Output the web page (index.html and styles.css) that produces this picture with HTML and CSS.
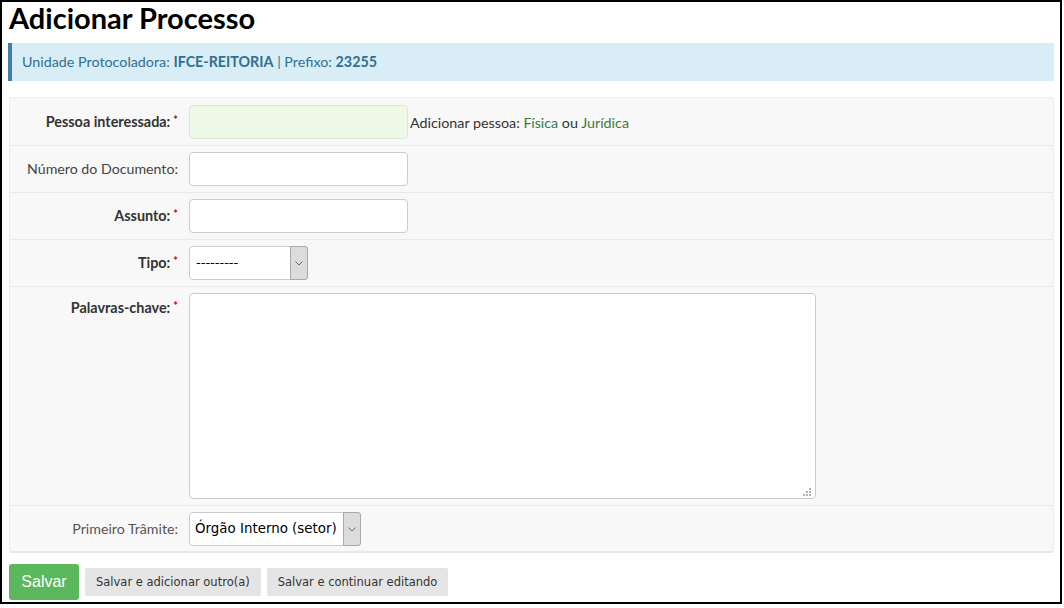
FILE: index.html
```html
<!DOCTYPE html>
<html lang="pt-BR">
<head>
<meta charset="utf-8">
<title>Adicionar Processo</title>
<link rel="stylesheet" href="styles.css">
</head>
<body>
<div class="page">
  <h1 class="title">Adicionar Processo</h1>
  <div class="info">Unidade Protocoladora: <b>IFCE-REITORIA</b> | Prefixo: <b>23255</b></div>
  <div class="fieldset">
    <div class="row">
      <label class="lbl req">Pessoa interessada:<span class="ast">*</span></label>
      <div class="field">
        <div class="input green"></div>
        <span class="help">Adicionar pessoa: <a class="lnk">Física</a> ou <a class="lnk">Jurídica</a></span>
      </div>
    </div>
    <div class="row">
      <label class="lbl">Número do Documento:</label>
      <div class="field"><div class="input"></div></div>
    </div>
    <div class="row">
      <label class="lbl req">Assunto:<span class="ast">*</span></label>
      <div class="field"><div class="input"></div></div>
    </div>
    <div class="row">
      <label class="lbl req">Tipo:<span class="ast">*</span></label>
      <div class="field">
        <div class="select sel-tipo">
          <span class="sel-text">---------</span>
          <span class="sel-arrow"><svg width="8" height="5" viewBox="0 0 8 5"><polyline points="0.5,0.5 4,4 7.5,0.5" fill="none" stroke="#666" stroke-width="1"/></svg></span>
        </div>
      </div>
    </div>
    <div class="row">
      <label class="lbl req top">Palavras-chave:<span class="ast">*</span></label>
      <div class="field tall">
        <div class="textarea">
          <svg class="grip" width="8" height="8" viewBox="0 0 8 8"><g fill="#b0b0b0"><rect x="6" y="0" width="2" height="2"/><rect x="3" y="3" width="2" height="2"/><rect x="6" y="3" width="2" height="2"/><rect x="0" y="6" width="2" height="2"/><rect x="3" y="6" width="2" height="2"/><rect x="6" y="6" width="2" height="2"/></g></svg>
        </div>
      </div>
    </div>
    <div class="row last">
      <label class="lbl light">Primeiro Trâmite:</label>
      <div class="field">
        <div class="select sel-tramite">
          <span class="sel-text big">Órgão Interno (setor)</span>
          <span class="sel-arrow"><svg width="8" height="5" viewBox="0 0 8 5"><polyline points="0.5,0.5 4,4 7.5,0.5" fill="none" stroke="#666" stroke-width="1"/></svg></span>
        </div>
      </div>
    </div>
  </div>
  <div class="actions">
    <button class="btn btn-primary">Salvar</button>
    <button class="btn btn-default">Salvar e adicionar outro(a)</button>
    <button class="btn btn-default">Salvar e continuar editando</button>
  </div>
</div>
</body>
</html>
```
FILE: styles.css
```css
html, body {
  margin: 0;
  padding: 0;
  background: #fff;
}
body {
  font-family: Lato, "Liberation Sans", sans-serif;
  color: #333;
}
.page {
  box-sizing: border-box;
  width: 1062px;
  height: 604px;
  border: 2px solid #000;
  padding: 0 6px 0 6px;
}
.title {
  margin: 1px 0 0 1px;
  font-size: 29px;
  line-height: 30px;
  font-weight: 700;
  color: #000;
}
.info {
  margin-top: 10px;
  height: 38px;
  box-sizing: border-box;
  background: #d9edf7;
  border-left: 4px solid #3e7fa8;
  padding: 0 10px;
  font-size: 14.3px;
  line-height: 38px;
  color: #31708f;
}
.info b { font-weight: 700; }
.fieldset {
  margin-top: 16px;
  margin-left: 1px;
  padding-top: 1px;
  background: #f8f8f8;
  border: 1px solid #eee;
  border-bottom: 2px solid #e8e8e8;
  border-radius: 3px;
}
.row {
  display: flex;
  align-items: flex-start;
  padding: 6px 0 6px;
  border-bottom: 1px solid #e9e9e9;
}
.row.last { border-bottom: none; padding-bottom: 5px; }
.lbl {
  flex: 0 0 168px;
  margin-right: 10px;
  padding-right: 1px;
  text-align: right;
  font-size: 14.2px;
  line-height: 34px;
  height: 34px;
  color: #444;
}
.lbl.req { font-weight: 700; color: #333; font-size: 14.4px; }
.lbl.top { line-height: 30px; }
.lbl.light { color: #555; }
.ast {
  position: relative;
  top: -3px;
  color: #cc0000;
  font-size: 11px;
  line-height: 0;
  margin-left: 3px;
  font-weight: 700;
}
.field {
  display: flex;
  align-items: center;
  height: 34px;
}
.field.tall { height: auto; }
.input {
  box-sizing: border-box;
  width: 219px;
  height: 34px;
  background: #fff;
  border: 1px solid #ccc;
  border-radius: 4px;
}
.input.green {
  background: #eff9e7;
  border-color: #dde5d6;
}
.help {
  margin-left: 2px;
  font-size: 14.3px;
  color: #333;
}
.lnk { color: #3a7b3f; text-decoration: none; }
.select {
  box-sizing: border-box;
  display: flex;
  align-items: stretch;
  height: 34px;
  background: #fff;
  border: 1px solid #ccc;
  border-radius: 4px;
}
.sel-tipo { width: 119px; }
.sel-tramite { width: 172px; }
.sel-text {
  flex: 1;
  padding-left: 6px;
  font-family: "DejaVu Sans", sans-serif;
  font-size: 13px;
  line-height: 32px;
  color: #000;
  white-space: nowrap;
  overflow: hidden;
}
.sel-text.big { font-size: 13.4px; padding-left: 5px; }
.sel-arrow {
  flex: 0 0 16px;
  margin: -1px -1px -1px 0;
  display: flex;
  align-items: center;
  justify-content: center;
  background: #dcdcdc;
  border: 1px solid #a9a9a9;
  border-radius: 0 3px 3px 0;
}
.textarea {
  position: relative;
  box-sizing: border-box;
  width: 627px;
  height: 206px;
  background: #fff;
  border: 1px solid #ccc;
  border-radius: 4px;
}
.grip {
  position: absolute;
  right: 4px;
  bottom: 2px;
}
.actions {
  display: flex;
  align-items: center;
  gap: 6px;
  margin-top: 11px;
  margin-left: 1px;
}
.btn {
  border: none;
  margin: 0;
  cursor: pointer;
}
.btn-primary {
  width: 70px;
  height: 36px;
  background: #5cb85c;
  color: #fff;
  border-radius: 3px;
  font-family: "Liberation Sans", Arial, sans-serif;
  font-size: 16px;
  padding: 0;
}
.btn-default {
  height: 28px;
  padding: 0 11px;
  background: #e5e5e5;
  color: #333;
  border-radius: 2px;
  font-family: "DejaVu Sans", sans-serif;
  font-size: 11.5px;
}
```
